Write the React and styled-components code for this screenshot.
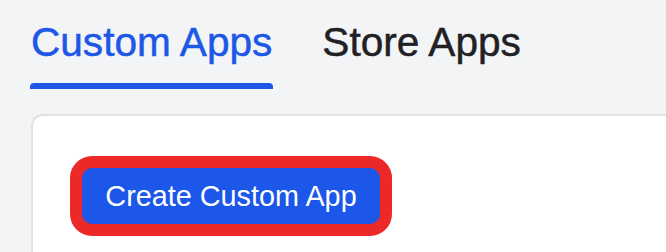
import React from "react";
import styled, { createGlobalStyle } from "styled-components";

const Global = createGlobalStyle`
  html, body { margin: 0; padding: 0; background: #f3f4f6; }
  body { font-family: "Liberation Sans", Arial, sans-serif; overflow: hidden; }
`;

const Page = styled.div`
  width: 666px;
  height: 252px;
  padding: 19px 0 0 30px;
  box-sizing: border-box;
  display: flex;
  flex-direction: column;
  gap: 25px;
  overflow: hidden;
`;

const TabBar = styled.div`
  display: flex;
  gap: 49px;
`;

const Tab = styled.button`
  all: unset;
  cursor: pointer;
  display: flex;
  flex-direction: column;
  gap: 18px;
  font-size: 40.6px;
  line-height: 46px;
  -webkit-text-stroke: 0.5px currentColor;
  color: ${(p) => (p.$active ? "#1c57e6" : "#1f2124")};
  padding: 0 ${(p) => (p.$active ? "1px" : "0")};
  &::after {
    content: "";
    display: block;
    height: 6px;
    margin: 0 -1px;
    border-radius: 4px 4px 0 0;
    background: ${(p) => (p.$active ? "#1c57e6" : "transparent")};
  }
`;

const Card = styled.div`
  margin-left: 1px;
  flex: 1;
  background: #ffffff;
  border: 2px solid #e1e2e4;
  border-bottom: none;
  border-right: none;
  border-radius: 12px 0 0 0;
  padding: 52px 0 0 49px;
`;

const PrimaryButton = styled.button`
  all: unset;
  cursor: pointer;
  box-sizing: border-box;
  width: 298px;
  height: 56px;
  display: flex;
  align-items: center;
  justify-content: center;
  background: #1c57e9;
  color: #ffffff;
  font-family: "Liberation Sans", Arial, sans-serif;
  font-size: 28.8px;
  border-radius: 10px;
  box-shadow: 0 0 0 12px #ec2929;
`;

export default function App() {
  return (
    <>
      <Global />
      <Page>
        <TabBar>
          <Tab $active>Custom Apps</Tab>
          <Tab>Store Apps</Tab>
        </TabBar>
        <Card>
          <PrimaryButton>Create Custom App</PrimaryButton>
        </Card>
      </Page>
    </>
  );
}
